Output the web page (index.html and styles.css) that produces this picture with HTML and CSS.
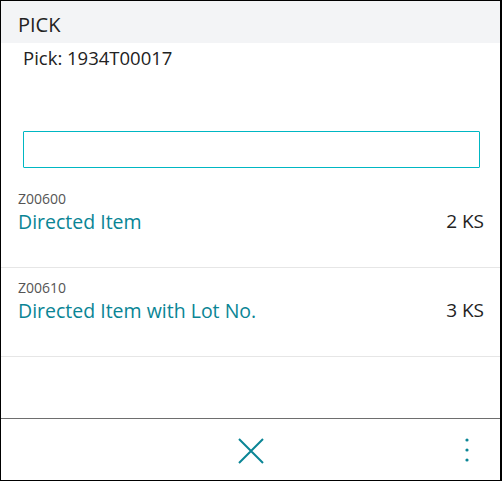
FILE: index.html
```html
<!DOCTYPE html>
<html lang="en">

<head>
    <meta charset="UTF-8" />
    <title>Pick</title>
    <meta name="viewport" content="width=device-width, initial-scale=1" />
    <link rel="stylesheet" href="styles.css">
</head>

<body>
    <div class="page">
        <div class="page-header">PICK</div>
        <div class="doc-title">Pick: 1934T00017</div>

        <div class="search-box">
            <div class="search-field">
                <input type="text" class="search-input" aria-label="Search">
            </div>
        </div>

        <div class="line-list">
            <div class="line-row">
                <span class="line-no">Z00600</span>
                <span class="line-name">Directed Item</span>
                <span class="line-qty">2 KS</span>
            </div>
            <div class="line-row">
                <span class="line-no">Z00610</span>
                <span class="line-name">Directed Item with Lot No.</span>
                <span class="line-qty">3 KS</span>
            </div>
        </div>

        <div class="action-bar">
            <span></span>
            <button class="icon-btn close-btn" aria-label="Close">
                <svg width="26" height="26" viewBox="0 0 26 26">
                    <path d="M1 1 L25 25 M25 1 L1 25" stroke="#0a8595" stroke-width="2" fill="none" />
                </svg>
            </button>
            <button class="icon-btn more-btn" aria-label="More">
                <svg width="4" height="24" viewBox="0 0 4 24">
                    <circle cx="2" cy="2" r="1.6" fill="#0a8595" />
                    <circle cx="2" cy="12" r="1.6" fill="#0a8595" />
                    <circle cx="2" cy="22" r="1.6" fill="#0a8595" />
                </svg>
            </button>
        </div>
    </div>
</body>

</html>
```

FILE: styles.css
```css
/* base */

* {
    box-sizing: border-box;
    font-family: "Open Sans", "Noto Sans", sans-serif;
}

body {
    margin: 0;
    background: white;
}

/* page frame */

.page {
    width: 502px;
    height: 481px;
    border: 1px solid #000;
    border-right-width: 2px;
    display: flex;
    flex-direction: column;
    background: white;
}

.page-header {
    height: 42px;
    padding: 10px 0 0 17px;
    background: #f3f4f6;
    font-size: 20px;
    line-height: 27px;
    color: #222;
}

.doc-title {
    margin-top: 2px;
    padding-left: 22px;
    font-size: 18.5px;
    line-height: 26px;
    color: #222;
}

/* search field */

.search-box {
    padding: 60px 20px 11px 22px;
}

.search-field {
    width: 457px;
    height: 37px;
    border: 1px solid #00b7c3;
    border-radius: 1px;
    background: white;
}

.search-input {
    display: block;
    width: 100%;
    height: 100%;
    border: none;
    outline: none;
    background: transparent;
    font-size: 16px;
}

/* lines */

.line-list {
    flex: 1;
}

.line-row {
    display: grid;
    grid-template-columns: 1fr auto;
    padding: 10px 16px 32px 17px;
    border-bottom: 1px solid #e6e6e6;
}

.line-no {
    grid-column: 1 / 3;
    font-size: 14px;
    line-height: 19px;
    color: #555;
}

.line-name {
    font-size: 19.5px;
    line-height: 27px;
    color: #0a8595;
}

.line-qty {
    font-size: 19px;
    line-height: 27px;
    color: #222;
}

/* bottom actions */

.action-bar {
    height: 62px;
    border-top: 1px solid #6e6e6e;
    display: grid;
    grid-template-columns: 1fr auto 1fr;
    align-items: center;
}

.icon-btn {
    background: none;
    border: none;
    padding: 0;
    cursor: pointer;
    display: flex;
}

.close-btn {
    margin-top: 3px;
}

.more-btn {
    justify-self: end;
    margin-right: 31px;
    margin-top: 1px;
}
```
